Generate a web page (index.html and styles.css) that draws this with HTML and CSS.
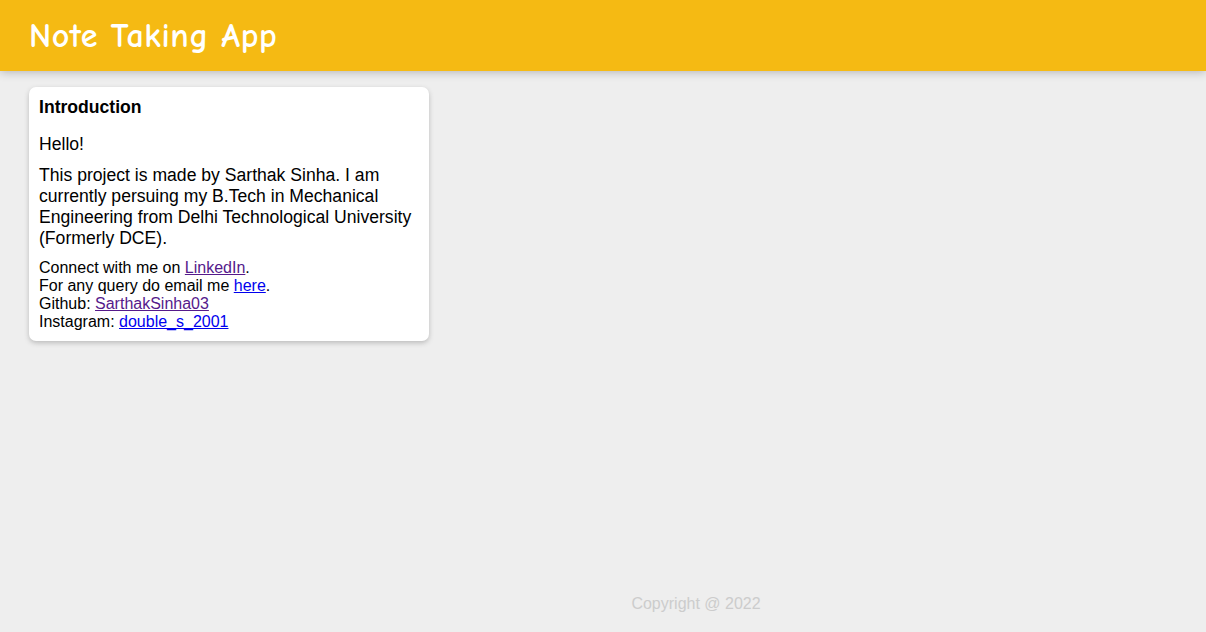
FILE: index.html
```html
<!DOCTYPE html>
<html>
<head>
<meta charset="utf-8">
<link rel="stylesheet" href="styles.css">
</head>
<body>
<header class="app-header">
  <h1 class="app-title">Note Taking App</h1>
</header>
<main class="notes">
  <div class="note">
    <h1 class="note-title">Introduction</h1>
    <p class="note-text">Hello!</p>
    <p class="note-text">This project is made by Sarthak Sinha. I am currently persuing my B.Tech in Mechanical Engineering from Delhi Technological University (Formerly DCE).</p>
    <div class="note-links">
      Connect with me on <a class="visited" href="#">LinkedIn</a>.<br>
      For any query do email me <a class="link" href="#">here</a>.<br>
      Github: <a class="visited" href="#">SarthakSinha03</a><br>
      Instagram: <a class="link" href="#">double_s_2001</a>
    </div>
  </div>
</main>
<footer class="app-footer">
  <p class="copyright">Copyright @ 2022</p>
</footer>
</body>
</html>
```

FILE: styles.css
```css
* { margin: 0; padding: 0; box-sizing: border-box; }
html, body { height: 100%; }
body {
  background: #eeeeee;
  font-family: "Liberation Sans", Arial, sans-serif;
  display: flex;
  flex-direction: column;
}
.app-header {
  background-color: #f5ba13;
  height: 71px;
  padding: 0 29px;
  display: flex;
  align-items: center;
  box-shadow: 0 0 10px 0 rgba(0, 0, 0, 0.3);
}
.app-title {
  color: #fff;
  font-family: "Comic Sans MS", "Comic Neue", cursive;
  font-weight: bold;
  font-size: 34px;
  letter-spacing: 0.6px;
  line-height: 40px;
}
.notes {
  flex: 1;
  padding: 16px 29px;
}
.note {
  background: #fff;
  border-radius: 7px;
  box-shadow: 0 2px 5px #bbb;
  padding: 10px;
  width: 400px;
}
.note-title {
  font-size: 17.6px;
  line-height: 21px;
  font-weight: bold;
  margin-bottom: 16px;
}
.note-text {
  font-size: 17.6px;
  line-height: 21px;
  margin-bottom: 10px;
}
.note-links {
  font-size: 16px;
  line-height: 18px;
}
.link { color: #0000ee; }
.visited { color: #551a8b; }
.app-footer {
  height: 37px;
  padding-left: 186px;
  text-align: center;
}
.copyright {
  color: #cccccc;
  font-size: 16px;
  line-height: 18px;
}
```
